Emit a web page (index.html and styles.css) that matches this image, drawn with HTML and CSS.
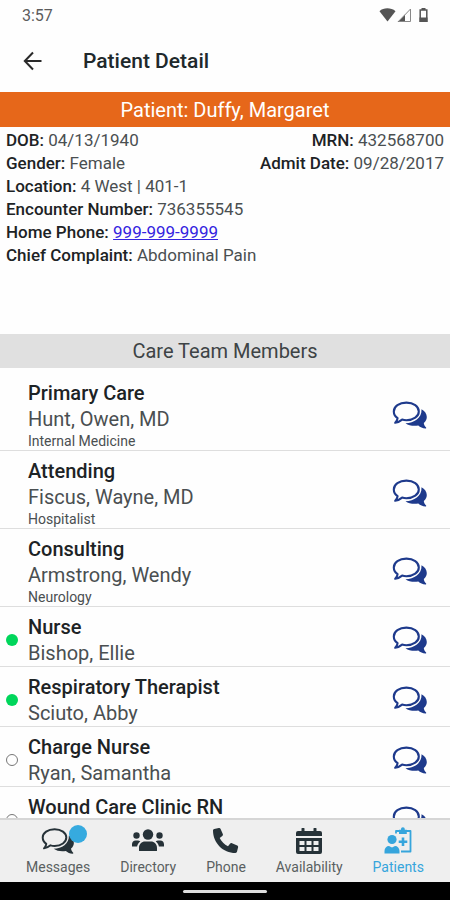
FILE: index.html
```html
<!DOCTYPE html>
<html lang="en">
<head>
<meta charset="utf-8">
<meta name="viewport" content="width=device-width, initial-scale=1">
<title>Patient Detail</title>
<link rel="stylesheet" href="styles.css">
</head>
<body>
<svg class="defs" aria-hidden="true">
  <symbol id="chat" viewBox="0 0 36 28">
    <path fill="none" stroke="currentColor" stroke-width="2.1" stroke-linejoin="round" d="M14.400 1.600C21.500 1.600 26.800 5.400 26.800 10.400S21.500 19.200 14.400 19.200c-1.600 0-3-.2-4.300-.6C8 20.300 5.700 21.600 3.200 21.800c1.300-1.300 2.200-2.900 2.400-4.700C3.100 15.400 1.800 13 1.800 10.400 1.800 5.400 7.200 1.600 14.400 1.600Z"/>
    <path fill="currentColor" d="M29.500 8.300c3.300 1.600 5.300 4.600 5.300 7.700 0 2.300-1.100 4.400-3 5.900.2 1.700 1 3.300 2.300 4.600.3.500 0 1.100-.6 1-2.900-.3-5.300-1.300-7.200-3-4.600.9-9.600.1-12.800-2.300 8.500 0 16.500-5 16-13.900Z"/>
  </symbol>
</svg>
<div class="status">
  <span>3:57</span>
  <svg class="status-icons" viewBox="0 0 52 16" aria-hidden="true">
    <path fill="#555" d="M1.500 4.200C5.500.4 13 .4 17.500 4.200L9.500 14.500Z"/>
    <path fill="#555" d="M19.500 15 27 7.500V15Z"/>
    <path fill="none" stroke="#888" d="M27 14.500h5.500V2L20.500 14.500Z"/>
    <path fill="none" stroke="#555" stroke-width="1.500" d="M42.200 3h6.600v11.200h-6.600Z"/>
    <path fill="#555" d="M43.500 1h4v2h-4zM41.500 10.500h8v4.500h-8z"/>
  </svg>
</div>
<header class="appbar">
  <button class="back" type="button" aria-label="Back">
    <svg viewBox="0 0 20 20"><path d="M19.500 10H3M11 1.500 2.800 10l8.200 8.500"/></svg>
  </button>
  <h1>Patient Detail</h1>
</header>
<main>
  <h2 class="patient">Patient: Duffy, Margaret</h2>
  <section class="details">
    <p><span><b>DOB:</b> 04/13/1940</span><span><b>MRN:</b> 432568700</span></p>
    <p><span><b>Gender:</b> Female</span><span><b>Admit Date:</b> 09/28/2017</span></p>
    <p><span><b>Location:</b> 4 West | 401-1</span></p>
    <p><span><b>Encounter Number:</b> 736355545</span></p>
    <p><span><b>Home Phone:</b> <a href="tel:9999999999">999-999-9999</a></span></p>
    <p><span><b>Chief Complaint:</b> Abdominal Pain</span></p>
  </section>
  <h2 class="team-title">Care Team Members</h2>
  <ul class="team">
    <li><i class="dot"></i><div class="who"><h3>Primary Care</h3><p>Hunt, Owen, MD</p><small>Internal Medicine</small></div><button type="button" aria-label="Message Owen Hunt"><svg><use href="#chat"/></svg></button></li>
    <li><i class="dot"></i><div class="who"><h3>Attending</h3><p>Fiscus, Wayne, MD</p><small>Hospitalist</small></div><button type="button" aria-label="Message Wayne Fiscus"><svg><use href="#chat"/></svg></button></li>
    <li><i class="dot"></i><div class="who"><h3>Consulting</h3><p>Armstrong, Wendy</p><small>Neurology</small></div><button type="button" aria-label="Message Wendy Armstrong"><svg><use href="#chat"/></svg></button></li>
    <li><i class="dot on"></i><div class="who"><h3>Nurse</h3><p>Bishop, Ellie</p></div><button type="button" aria-label="Message Ellie Bishop"><svg><use href="#chat"/></svg></button></li>
    <li><i class="dot on"></i><div class="who"><h3>Respiratory Therapist</h3><p>Sciuto, Abby</p></div><button type="button" aria-label="Message Abby Sciuto"><svg><use href="#chat"/></svg></button></li>
    <li><i class="dot off"></i><div class="who"><h3>Charge Nurse</h3><p>Ryan, Samantha</p></div><button type="button" aria-label="Message Samantha Ryan"><svg><use href="#chat"/></svg></button></li>
    <li class="last"><i class="dot off"></i><div class="who"><h3>Wound Care Clinic RN</h3></div><button type="button" aria-label="Message Wound Care Clinic RN"><svg><use href="#chat"/></svg></button></li>
  </ul>
</main>
<nav class="tabs">
  <a href="#messages"><span class="icon"><svg class="wide"><use href="#chat"/></svg><i class="badge"></i></span>Messages</a>
  <a href="#directory"><span class="icon"><svg class="wide" viewBox="0 0 34 28" fill="currentColor"><circle cx="17" cy="7.500" r="5.200"/><circle cx="5.500" cy="8.500" r="3.200"/><circle cx="28.500" cy="8.500" r="3.200"/><path d="M8 23.500v-2.500c0-4 2.800-6.500 6-6.500h6c3.200 0 6 2.500 6 6.500v2.500q0 .5-.5.500h-17q-.5 0-.5-.5ZM1 19.500v-2.300C1 15 2.600 13.500 4.600 13.500h2.200c1 0 1.900.4 2.500 1-1.800 1.200-2.800 3-3.200 5ZM33 19.500v-2.300c0-2.200-1.600-3.700-3.600-3.700h-2.200c-1 0-1.900.4-2.500 1 1.800 1.200 2.800 3 3.200 5Z"/></svg></span>Directory</a>
  <a href="#phone"><span class="icon"><svg viewBox="0 0 28 28" fill="currentColor"><path d="M2.200 2 6.800 1c.8-.2 1.500.2 1.800.9l2.200 5.200c.3.700.1 1.400-.5 1.800L7.700 11c1.800 3.700 4.600 6.500 8.300 8.300l2.200-2.700c.5-.6 1.200-.7 1.800-.4l5.200 2.200c.7.300 1.100 1 .9 1.800l-1.100 4.600c-.2.700-.8 1.200-1.500 1.200C11 26 1 16 1 3.500 1 2.800 1.500 2.200 2.200 2Z"/></svg></span>Phone</a>
  <a href="#availability"><span class="icon"><svg viewBox="0 0 28 28"><path fill="currentColor" fill-rule="evenodd" d="M1 11h26v14q0 2-2 2H3q-2 0-2-2ZM4.500 14v4h5v-4ZM11.500 14v4h5v-4ZM18.500 14v4h5v-4ZM4.500 20v4h5v-4ZM11.500 20v4h5v-4ZM18.500 20v4h5v-4ZM1 9V6q0-2 2-2h3.500V1.500q0-.5.500-.5h2q.5 0 .5.500V4h9V1.500q0-.5.500-.5h2q.5 0 .5.500V4H25q2 0 2 2v3Z"/></svg></span>Availability</a>
  <a href="#patients" class="active" aria-current="page"><span class="icon"><svg viewBox="0 0 28 28"><path fill="none" stroke="currentColor" stroke-width="1.800" stroke-linejoin="round" d="M12 6.500V4h3.500M21 4h5.500v20.500H17"/><path fill="currentColor" d="M15 2.800H17C17 1 17.700.3 18.900.3s1.900.7 1.900 2.500h2V7H15ZM17.700 10.500h2.600v3h3v2.600h-3v3h-2.600v-3h-3v-2.600h3Z"/><circle cx="8" cy="12.500" r="4.600" fill="currentColor"/><path fill="currentColor" d="M.5 26.500v-2.500C.5 21 2.500 19 5 19L8 20.500l3-1.500c2.500 0 4.500 2 4.500 5v2.500Z"/></svg></span>Patients</a>
</nav>
<footer class="home"><i></i></footer>
</body>
</html>
```
FILE: styles.css
```css
* { box-sizing: border-box; }

body {
  margin: 0;
  height: 100vh;
  display: flex;
  flex-direction: column;
  background: #fefefe;
  color: #4a4f51;
  font-family: Roboto, "Liberation Sans", sans-serif;
}

h1, h2, h3, p, ul { margin: 0; padding: 0; font-weight: 400; }
button { border: 0; padding: 0; background: none; color: inherit; }
svg { display: block; }
.defs { position: absolute; width: 0; height: 0; }

.status {
  flex: none;
  height: 30px;
  padding: 0 20px 0 22px;
  display: flex;
  align-items: center;
  justify-content: space-between;
  font-size: 16px;
  color: #5c5c5c;
}
.status-icons { width: 52px; height: 16px; }

.appbar {
  flex: none;
  height: 62px;
  padding: 0 22px;
  display: flex;
  align-items: center;
  gap: 40px;
}
.back { width: 21px; height: 20px; }
.back svg { width: 20px; height: 20px; fill: none; stroke: #2a2a2a; stroke-width: 2; }
h1 { font-size: 21px; font-weight: 500; color: #20282b; }

main {
  flex: 1;
  min-height: 0;
  display: flex;
  flex-direction: column;
  overflow: hidden;
}

.patient {
  flex: none;
  background: #e6671a;
  color: #fff;
  font-size: 20px;
  line-height: 34px;
  padding-top: 1px;
  text-align: center;
}

.details {
  flex: none;
  min-height: 207px;
  padding: 2px 6px 0;
  font-size: 17px;
  line-height: 23px;
}
.details p { display: flex; justify-content: space-between; }
.details b { font-weight: 500; color: #1d2325; }
.details a { color: #3423e0; }

.team-title {
  flex: none;
  background: #e0e0e0;
  color: #3d4345;
  font-size: 20px;
  line-height: 34px;
  text-align: center;
}

.team { list-style: none; padding-top: 5px; }
.team li {
  display: flex;
  align-items: center;
  padding: 7px 22px 0 6px;
  border-bottom: 1px solid #dedede;
}
.who { flex: 1; padding-left: 10px; }
.team h3 { font-size: 20px; line-height: 26px; font-weight: 500; color: #1d2325; }
.team p { font-size: 20px; line-height: 26px; }
.team small { display: block; font-size: 14px; line-height: 18px; }
.team button { width: 36px; height: 28px; color: #1e3a8c; }
.team button svg { width: 36px; height: 28px; }
.team .last { min-height: 60px; align-items: flex-start; }
.last .dot, .last button { align-self: center; }

.dot { width: 12px; height: 12px; border-radius: 50%; }
.on { background: #00d65b; }
.off { border: 1px solid #777; }

.tabs {
  flex: none;
  height: 64px;
  padding: 7px 11px 0;
  display: flex;
  justify-content: space-around;
  background: #efefef;
  border-top: 2px solid #d6d6d6;
}
.tabs a {
  display: flex;
  flex-direction: column;
  align-items: center;
  color: #5a5f61;
  font-size: 14px;
  line-height: 20px;
  text-decoration: none;
}
.icon { position: relative; color: #263238; margin-bottom: 2px; }
.icon svg { width: 28px; height: 28px; }
.icon .wide { width: 34px; }
.tabs .active, .active .icon { color: #36a5dc; }
.badge {
  position: absolute;
  top: -2px;
  right: -12px;
  width: 18px;
  height: 18px;
  border-radius: 50%;
  background: #36aadf;
}

.home {
  flex: none;
  height: 18px;
  display: flex;
  align-items: center;
  justify-content: center;
  background: #000;
}
.home i { width: 84px; height: 3px; border-radius: 2px; background: #ddd; }
```
